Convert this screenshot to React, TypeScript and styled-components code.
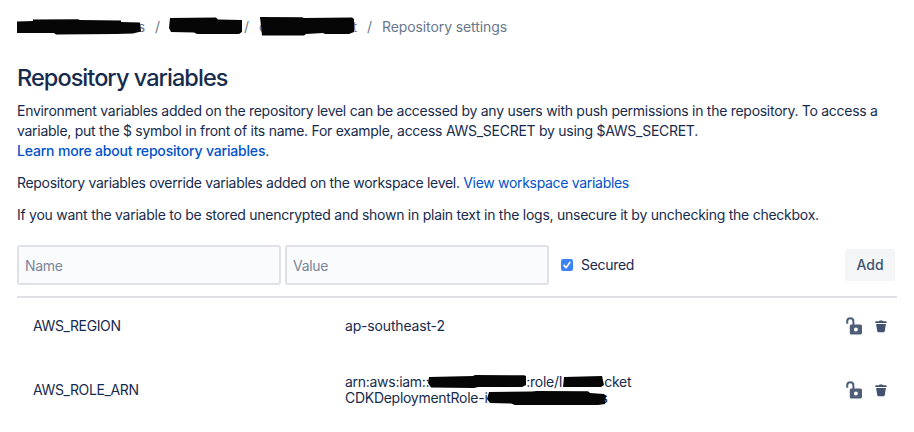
import React from "react";
import styled, { createGlobalStyle } from "styled-components";

const GlobalStyle = createGlobalStyle`
  * { box-sizing: border-box; }
  body {
    margin: 0;
    background: #fff;
    color: #172b4d;
    font: 14px/20px Inter, sans-serif;
    letter-spacing: -0.1px;
  }
`;

const Page = styled.main`
  width: 914px;
  height: 432px;
  padding: 17px 17px 0;
  overflow: hidden;
`;

const Breadcrumbs = styled.nav`
  display: flex;
  height: 20px;
  color: #6b778c;
  white-space: nowrap;
`;

const Crumb = styled.span<{ $width?: number }>`
  position: relative;
  display: flex;
  justify-content: space-between;
  flex: none;
  width: ${(p) => (p.$width ? `${p.$width}px` : "auto")};
`;

const Separator = styled.span<{ $before: number; $after: number }>`
  flex: none;
  width: 5px;
  margin: 0 ${(p) => p.$after}px 0 ${(p) => p.$before}px;
`;

const Marker = styled.svg<{ $left: number; $top: number }>`
  position: absolute;
  left: ${(p) => p.$left}px;
  top: ${(p) => p.$top}px;
  overflow: visible;
  fill: #060606;
`;

const Title = styled.h1`
  margin: 27px 0 9px;
  font-size: 23.5px;
  line-height: 28px;
  font-weight: 550;
  letter-spacing: -0.95px;
  white-space: nowrap;
`;

const Paragraph = styled.p`
  margin: 0 0 12px;
`;

const Line = styled.span<{ $tracking?: number }>`
  display: block;
  white-space: nowrap;
  letter-spacing: ${(p) => p.$tracking ?? -0.28}px;
`;

const Link = styled.a<{ $strong?: boolean }>`
  color: #0052cc;
  text-decoration: none;
  font-weight: ${(p) => (p.$strong ? 500 : 400)};
`;

const Form = styled.form`
  display: flex;
  align-items: center;
  width: 880px;
  height: 53px;
  margin-top: 20px;
  padding-bottom: 11px;
  border-bottom: 2px solid #dfe1e6;
`;

const Field = styled.input`
  width: 264px;
  height: 40px;
  margin-right: 4px;
  padding: 0 6px;
  border: 2px solid #dfe1e6;
  border-radius: 3px;
  background: #fafbfc;
  color: #172b4d;
  font: inherit;
  letter-spacing: -0.3px;
  outline: none;
  &::placeholder { color: #7a869a; opacity: 1; }
`;

const CheckLabel = styled.label`
  display: flex;
  align-items: center;
  gap: 8px;
  margin-left: 8px;
  letter-spacing: -0.3px;
`;

const AddButton = styled.button`
  width: 50px;
  height: 32px;
  margin: 0 2px 0 auto;
  padding: 0;
  border: 0;
  border-radius: 3px;
  background: #f4f5f7;
  color: #42526e;
  font: 500 14px/32px Inter, sans-serif;
`;

const VariableRow = styled.div<{ $height: number }>`
  display: grid;
  grid-template-columns: 312px 501px auto;
  align-items: center;
  width: 880px;
  height: ${(p) => p.$height}px;
  padding-left: 16px;
  line-height: 16px;
`;

const Name = styled.span`
  letter-spacing: -0.38px;
`;

const Value = styled.div`
  position: relative;
  letter-spacing: -0.17px;
`;

const Hidden = styled.span<{ $width: number }>`
  display: inline-block;
  width: ${(p) => p.$width}px;
`;

const Actions = styled.div`
  display: flex;
  gap: 12px;
  align-items: center;
`;

const CheckIcon = () => (
  <svg width="12" height="12" viewBox="0 0 12 12">
    <rect width="12" height="12" rx="2.2" fill="#3b82f7" />
    <path d="M3 6.4 5.1 8.7 9 3.3" fill="none" stroke="#fff" strokeWidth="1.6" strokeLinecap="round" strokeLinejoin="round" />
  </svg>
);

const UnlockIcon = () => (
  <svg width="17" height="18" viewBox="0 0 17 18">
    <path d="M1.200 6.800V4.400a3.100 3.100 0 0 1 6.200 0V8" fill="none" stroke="#505f79" strokeWidth="2" />
    <path fillRule="evenodd" fill="#505f79" d="M5.300 7.500h9.200a1.500 1.500 0 0 1 1.500 1.500v7a1.500 1.500 0 0 1-1.500 1.500H5.300a1.500 1.500 0 0 1-1.500-1.500V9a1.500 1.500 0 0 1 1.500-1.500ZM9.900 10.500a2 2 0 1 0 0 4 2 2 0 0 0 0-4Z" />
  </svg>
);

const TrashIcon = () => (
  <svg width="12" height="13" viewBox="0 0 12 13" fill="#42526e">
    <path d="M.3 3V2.100a.8.800 0 0 1 .8-.8H4a.9.900 0 0 1 .9-.9h2.200a.9.900 0 0 1 .9.900h2.900a.8.800 0 0 1 .8.800V3ZM1.100 4.100h9.800L9.800 11.100A1.400 1.400 0 0 1 8.400 12.300H3.600a1.400 1.400 0 0 1-1.400-1.200Z" />
  </svg>
);

const RowActions = () => (
  <Actions>
    <UnlockIcon />
    <TrashIcon />
  </Actions>
);

export default function App() {
  return (
    <>
      <GlobalStyle />
      <Page>
        <Breadcrumbs>
          <Crumb $width={128}>
            <span />
            <span>s</span>
            <Marker $left={-1} $top={2} width="129" height="16">
              <path d="M1 2.500 17 2V.5L62 .3 64 1 105 1.500V3L124 3.500 125 12.500 117 14.500 100 15 40 15.500 38 14 1 14Z" />
            </Marker>
          </Crumb>
          <Separator $before={10} $after={9}>/</Separator>
          <Crumb $width={73}>
            <Marker $left={0} $top={0} width="74" height="17">
              <path d="M1 1 47 .5 49 2.500 73 3V15L70 17H28L25 15.500 2 15 0 11Z" />
            </Marker>
          </Crumb>
          <Separator $before={2} $after={10}>/</Separator>
          <Crumb $width={98}>
            <span>c</span>
            <span>t</span>
            <Marker $left={1} $top={0} width="95" height="19">
              <path d="M0 0 42 .2 44 1 92 .5 94 2V15L89 17H65L63 16 46 17 44 18.500H2Z" />
            </Marker>
          </Crumb>
          <Separator $before={10} $after={10}>/</Separator>
          <Crumb>Repository settings</Crumb>
        </Breadcrumbs>
        <Title>Repository variables</Title>
        <Paragraph>
          <Line>Environment variables added on the repository level can be accessed by any users with push permissions in the repository. To access a</Line>
          <Line $tracking={-0.27}>variable, put the $ symbol in front of its name. For example, access AWS_SECRET by using $AWS_SECRET.</Line>
          <Line $tracking={-0.18}><Link $strong>Learn more about repository variables</Link>.</Line>
        </Paragraph>
        <Paragraph>
          <Line $tracking={-0.31}>Repository variables override variables added on the workspace level. <Link>View workspace variables</Link></Line>
        </Paragraph>
        <Paragraph>
          <Line $tracking={-0.255}>If you want the variable to be stored unencrypted and shown in plain text in the logs, unsecure it by unchecking the checkbox.</Line>
        </Paragraph>
        <Form>
          <Field placeholder="Name" />
          <Field placeholder="Value" />
          <CheckLabel><CheckIcon />Secured</CheckLabel>
          <AddButton type="button">Add</AddButton>
        </Form>
        <section>
          <VariableRow $height={56}>
            <Name>AWS_REGION</Name>
            <Value>ap-southeast-2</Value>
            <RowActions />
          </VariableRow>
          <VariableRow $height={72}>
            <Name>AWS_ROLE_ARN</Name>
            <Value>
              <Line>arn:aws:iam::<Hidden $width={97} />:role/I<Hidden $width={42} />cket</Line>
              <Line>CDKDeploymentRole-i<Hidden $width={113} />s</Line>
              <Marker $left={83} $top={1} width="98" height="14">
                <path d="M1 2 45 1 47 0 96 .2 98 1V10L94 12 50 12 46 13 3 12.500 0 8Z" />
              </Marker>
              <Marker $left={217} $top={2} width="42" height="12">
                <path d="M2 1 40 0 42 9 39 11 1 11Z" />
              </Marker>
              <Marker $left={142} $top={17} width="120" height="15">
                <path d="M2 1 45 .5 50 0 101 .2 103 2 117 3 119 5 118 13 111 14 28 14 24 12.500 3 12 0 8Z" />
              </Marker>
            </Value>
            <RowActions />
          </VariableRow>
        </section>
      </Page>
    </>
  );
}
